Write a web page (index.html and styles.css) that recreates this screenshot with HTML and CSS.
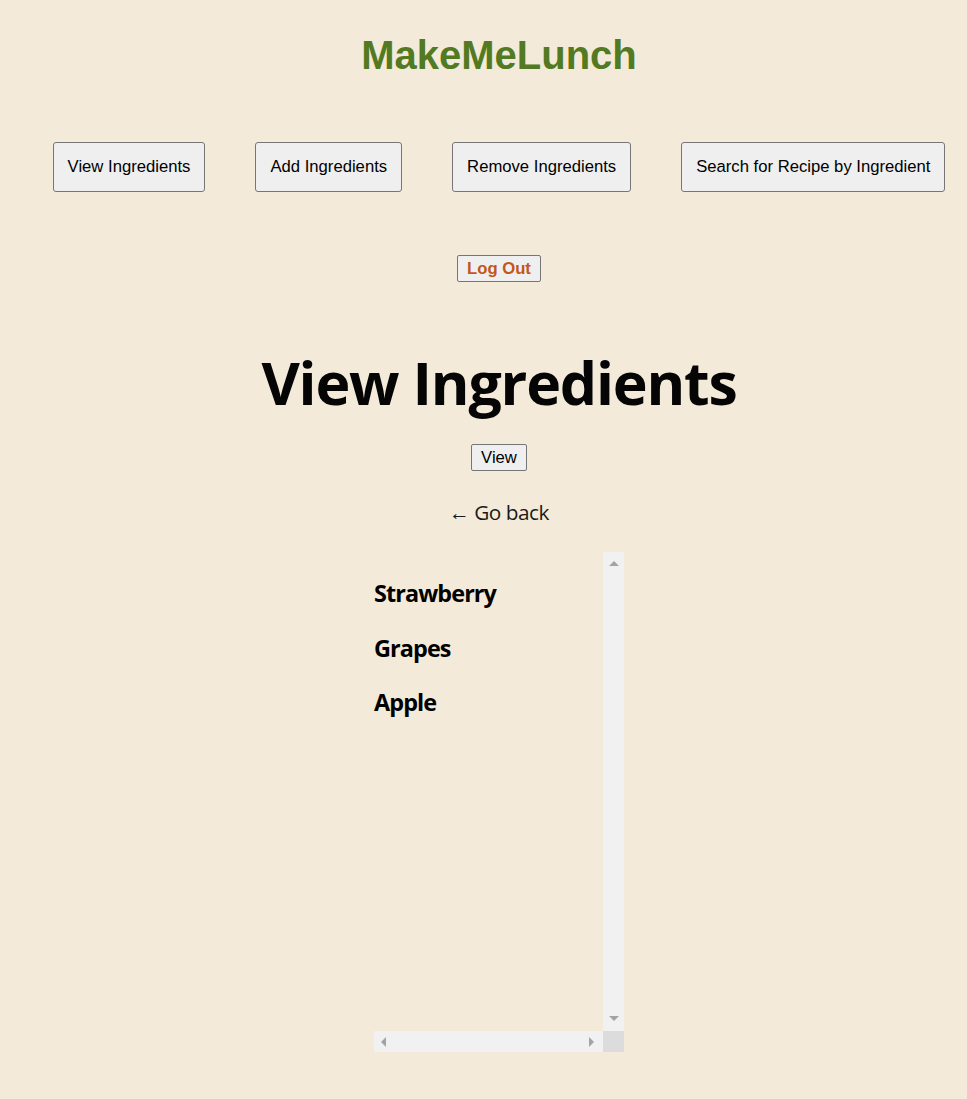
FILE: index.html
```html
<!DOCTYPE html>
<html lang="en">
<head>
<meta charset="utf-8">
<title>MakeMeLunch</title>
<link rel="stylesheet" href="styles.css">
</head>
<body>
<div class="page">
  <h1 class="brand">MakeMeLunch</h1>
  <nav class="nav">
    <button class="nav-btn">View Ingredients</button>
    <button class="nav-btn">Add Ingredients</button>
    <button class="nav-btn">Remove Ingredients</button>
    <button class="nav-btn">Search for Recipe by Ingredient</button>
  </nav>
  <div class="logout-row"><button class="logout">Log Out</button></div>
  <h2 class="title">View Ingredients</h2>
  <div class="view-row"><button class="small-btn">View</button></div>
  <div class="back-row"><a class="back" href="#">← Go back</a></div>
  <div class="list-box">
    <div class="list-content">
      <h3 class="item">Strawberry</h3>
      <h3 class="item">Grapes</h3>
      <h3 class="item">Apple</h3>
    </div>
    <div class="vbar"><span class="arr up"></span><span class="arr down"></span></div>
    <div class="hbar"><span class="arr left"></span><span class="arr right"></span></div>
    <div class="corner"></div>
  </div>
</div>
</body>
</html>
```

FILE: styles.css
```css
html, body {
  margin: 0;
  padding: 0;
  background: #f4ead9;
}
.page {
  padding-left: 31px;
  display: flex;
  flex-direction: column;
  align-items: center;
  font-family: "Open Sans", "Noto Sans", sans-serif;
  color: #0a0a0a;
}
.brand {
  margin: 32px 0 0;
  font-family: "Liberation Sans", Arial, sans-serif;
  font-size: 40px;
  line-height: 46px;
  font-weight: bold;
  color: #527a22;
}
.nav {
  margin-top: 64px;
  display: flex;
  justify-content: center;
  gap: 50px;
}
.nav-btn {
  height: 50px;
  padding: 0 14px;
  font-family: "Liberation Sans", Arial, sans-serif;
  font-size: 16.67px;
  color: #000;
  background: #efefef;
  border: 1px solid #767676;
  border-radius: 3px;
  white-space: nowrap;
}
.logout-row {
  margin-top: 63px;
}
.logout {
  height: 27px;
  padding: 0 9px;
  font-family: "Liberation Sans", Arial, sans-serif;
  font-size: 16.67px;
  font-weight: bold;
  color: #c4561c;
  background: #efefef;
  border: 1px solid #767676;
  border-radius: 2px;
}
.title {
  margin: 64px 0 0;
  font-size: 59px;
  line-height: 72px;
  letter-spacing: -1.2px;
  font-weight: bold;
  color: #050505;
}
.view-row {
  margin-top: 26px;
}
.small-btn {
  height: 27px;
  padding: 0 9px;
  font-family: "Liberation Sans", Arial, sans-serif;
  font-size: 16.67px;
  color: #000;
  background: #efefef;
  border: 1px solid #767676;
  border-radius: 2px;
}
.back-row {
  margin-top: 27px;
}
.back {
  display: block;
  font-size: 20.8px;
  line-height: 28px;
  letter-spacing: -0.5px;
  color: #1a1a1a;
  text-decoration: none;
}
.list-box {
  margin-top: 26px;
  margin-bottom: 47px;
  width: 250px;
  height: 500px;
  display: grid;
  grid-template-columns: 229px 21px;
  grid-template-rows: 479px 21px;
}
.list-content {
  overflow: hidden;
  padding-top: 3px;
}
.item {
  margin: 23.4px 0;
  font-size: 23.4px;
  line-height: 31px;
  letter-spacing: -0.9px;
  font-weight: bold;
  color: #000;
  white-space: nowrap;
}
.vbar, .hbar {
  background: #f1f1f1;
  display: flex;
  justify-content: space-between;
  align-items: center;
}
.vbar {
  flex-direction: column;
  padding: 9px 0 10px;
}
.hbar {
  padding: 0 9px 0 7px;
}
.corner {
  background: #dcdcdc;
}
.arr {
  width: 0;
  height: 0;
  border-style: solid;
  border-color: transparent;
}
.arr.up {
  border-width: 0 5px 5px;
  border-bottom-color: #a3a3a3;
}
.arr.down {
  border-width: 5px 5px 0;
  border-top-color: #a3a3a3;
}
.arr.left {
  border-width: 5px 5px 5px 0;
  border-right-color: #a3a3a3;
}
.arr.right {
  border-width: 5px 0 5px 5px;
  border-left-color: #a3a3a3;
}
```
